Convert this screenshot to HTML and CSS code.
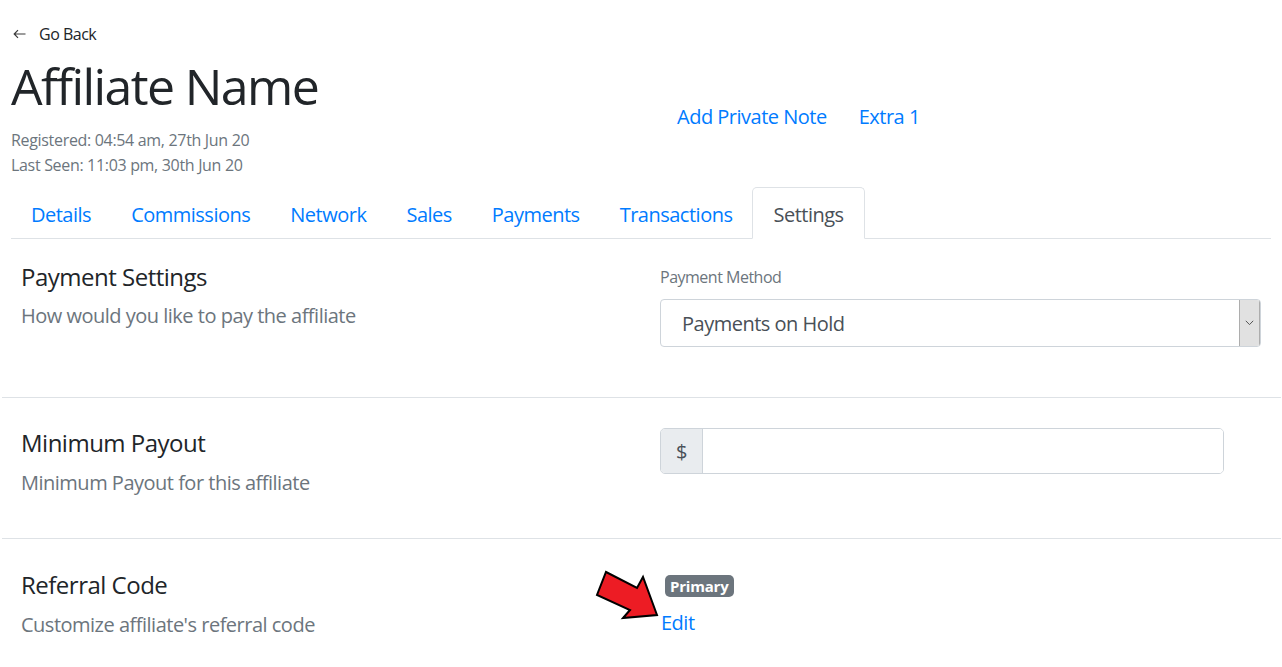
FILE: index.html
```html
<!DOCTYPE html>
<html lang="en">
<head>
<meta charset="utf-8">
<title>Affiliate Name</title>
<link rel="stylesheet" href="styles.css">
</head>
<body>
<div class="page">
  <header class="header">
    <div class="header-left">
      <a class="back" href="#">
        <svg class="back-icon" width="13" height="10" viewBox="0 0 13 10"><path d="M12.5 5H1.2M5 1.2L1.2 5L5 8.8" fill="none" stroke="#3a3a3a" stroke-width="1.2"/></svg>
        <span>Go Back</span>
      </a>
      <h1 class="title">Affiliate Name</h1>
      <div class="meta">Registered: 04:54 am, 27th Jun 20</div>
      <div class="meta">Last Seen: 11:03 pm, 30th Jun 20</div>
    </div>
    <nav class="header-links">
      <a href="#">Add Private Note</a>
      <a href="#">Extra 1</a>
    </nav>
  </header>

  <ul class="tabs">
    <li><a class="tab" href="#">Details</a></li>
    <li><a class="tab" href="#">Commissions</a></li>
    <li><a class="tab" href="#">Network</a></li>
    <li><a class="tab" href="#">Sales</a></li>
    <li><a class="tab" href="#">Payments</a></li>
    <li><a class="tab" href="#">Transactions</a></li>
    <li><a class="tab active" href="#">Settings</a></li>
  </ul>

  <div class="settings">
    <section class="setting setting-first">
      <div class="setting-info">
        <h4 class="setting-title">Payment Settings</h4>
        <p class="setting-desc">How would you like to pay the affiliate</p>
      </div>
      <div class="setting-control control-first">
        <label class="field-label">Payment Method</label>
        <div class="select">
          <span class="select-value">Payments on Hold</span>
          <span class="select-button">
            <svg width="9" height="6" viewBox="0 0 9 6"><path d="M0.8 0.8L4.5 4.6L8.2 0.8" fill="none" stroke="#555" stroke-width="1"/></svg>
          </span>
        </div>
      </div>
    </section>

    <section class="setting setting-mid">
      <div class="setting-info">
        <h4 class="setting-title">Minimum Payout</h4>
        <p class="setting-desc">Minimum Payout for this affiliate</p>
      </div>
      <div class="setting-control control-mid">
        <div class="input-group">
          <span class="input-prepend">$</span>
          <span class="input-field"></span>
        </div>
      </div>
    </section>

    <section class="setting setting-last">
      <div class="setting-info">
        <h4 class="setting-title">Referral Code</h4>
        <p class="setting-desc">Customize affiliate's referral code</p>
      </div>
      <div class="setting-control control-last">
        <span class="badge">Primary</span>
        <a class="edit" href="#">Edit</a>
      </div>
      <svg class="pointer" width="80" height="64" viewBox="590 562 80 64">
        <polygon points="606,571 637,587 643,576 657,614 623,617 630,609 597,594" fill="#ed1c24" stroke="#000" stroke-width="2" stroke-linejoin="miter"/>
      </svg>
    </section>
  </div>
</div>
</body>
</html>
```

FILE: styles.css
```css
* { box-sizing: border-box; }

html, body {
  margin: 0;
  padding: 0;
  background: #fff;
}

body {
  font-family: "Segoe UI", "Open Sans", sans-serif;
  font-size: 20px;
  line-height: 1.5;
  letter-spacing: -0.025em;
  color: #212529;
}

a { text-decoration: none; color: #007bff; }

.page {
  padding: 22px 11px 0;
}

.header {
  display: grid;
  grid-template-columns: 1fr 1fr;
}

.back {
  display: flex;
  align-items: center;
  gap: 13px;
  padding-left: 2px;
  font-size: 16px;
  line-height: 24px;
  color: #212529;
}

.back-icon { display: block; }

.title {
  margin: 10px 0 12px;
  font-size: 50px;
  font-weight: 400;
  line-height: 60px;
  letter-spacing: -0.032em;
  color: #212529;
}

.meta {
  font-size: 16px;
  line-height: 25px;
  letter-spacing: -0.02em;
  color: #6c757d;
}

.meta:first-of-type { margin-top: 1px; }

.header-links {
  display: flex;
  gap: 32px;
  padding-top: 80px;
  padding-left: 36px;
  line-height: 30px;
}

.tabs {
  display: flex;
  list-style: none;
  margin: 9px 0 0;
  padding: 0;
  border-bottom: 1px solid #dee2e6;
}

.tabs li { margin-bottom: -1px; }

.tab {
  display: block;
  padding: 12px 19px 8px;
  border: 1px solid transparent;
  border-top-left-radius: 5px;
  border-top-right-radius: 5px;
  line-height: 30px;
  color: #007bff;
}

.tab.active {
  padding-left: 20px;
  padding-right: 20px;
  color: #495057;
  background: #fff;
  border-color: #dee2e6 #dee2e6 #fff;
}

.settings {
  margin: 0 -10px 0 -9px;
}

.setting {
  position: relative;
  display: grid;
  grid-template-columns: 1fr 1fr;
  column-gap: 38px;
  align-items: start;
  padding: 0 20px 0 19px;
  border-bottom: 1px solid #dee2e6;
}

.setting-first { padding-top: 23px; padding-bottom: 50px; }
.setting-mid { padding-top: 30px; padding-bottom: 40px; }
.setting-last { padding-top: 31px; padding-bottom: 30px; border-bottom: none; }

.setting-title {
  margin: 0;
  font-size: 24px;
  font-weight: 400;
  line-height: 29px;
  color: #212529;
}

.setting-desc {
  margin: 10px 0 0;
  line-height: 30px;
  color: #6c757d;
}

.setting-mid .setting-desc,
.setting-last .setting-desc { margin-top: 11px; }

.control-first { padding-top: 3px; }
.control-mid { margin-top: 0; }
.control-last { padding-top: 0; }

.field-label {
  display: block;
  margin-bottom: 10px;
  font-size: 16px;
  line-height: 24px;
  color: #6c757d;
}

.select {
  display: flex;
  align-items: stretch;
  height: 48px;
  border: 1px solid #ced4da;
  border-radius: 4px;
  overflow: hidden;
}

.select-value {
  flex: 1;
  display: flex;
  align-items: center;
  padding-left: 21px;
  padding-top: 2px;
  color: #495057;
}

.select-button {
  width: 21px;
  display: flex;
  align-items: center;
  justify-content: center;
  background: #e1e1e1;
  border-left: 1px solid #adadad;
  border-right: 1px solid #adadad;
}

.input-group {
  display: flex;
  width: 564px;
  height: 46px;
  border: 1px solid #ced4da;
  border-radius: 5px;
  overflow: hidden;
}

.input-prepend {
  width: 42px;
  display: flex;
  align-items: center;
  justify-content: center;
  padding-top: 2px;
  background: #e9ecef;
  border-right: 1px solid #ced4da;
  color: #495057;
}

.input-field { flex: 1; background: #fff; }

.badge {
  display: inline-block;
  margin-left: 5px;
  padding: 0 5px;
  font-size: 15px;
  font-weight: 700;
  line-height: 22px;
  letter-spacing: -0.2px;
  color: #fff;
  background: #6c757d;
  border-radius: 5px;
}

.edit {
  display: block;
  margin-top: 8px;
  margin-left: 1px;
  line-height: 30px;
}

.pointer {
  position: absolute;
  left: 588px;
  top: 24px;
}
```
